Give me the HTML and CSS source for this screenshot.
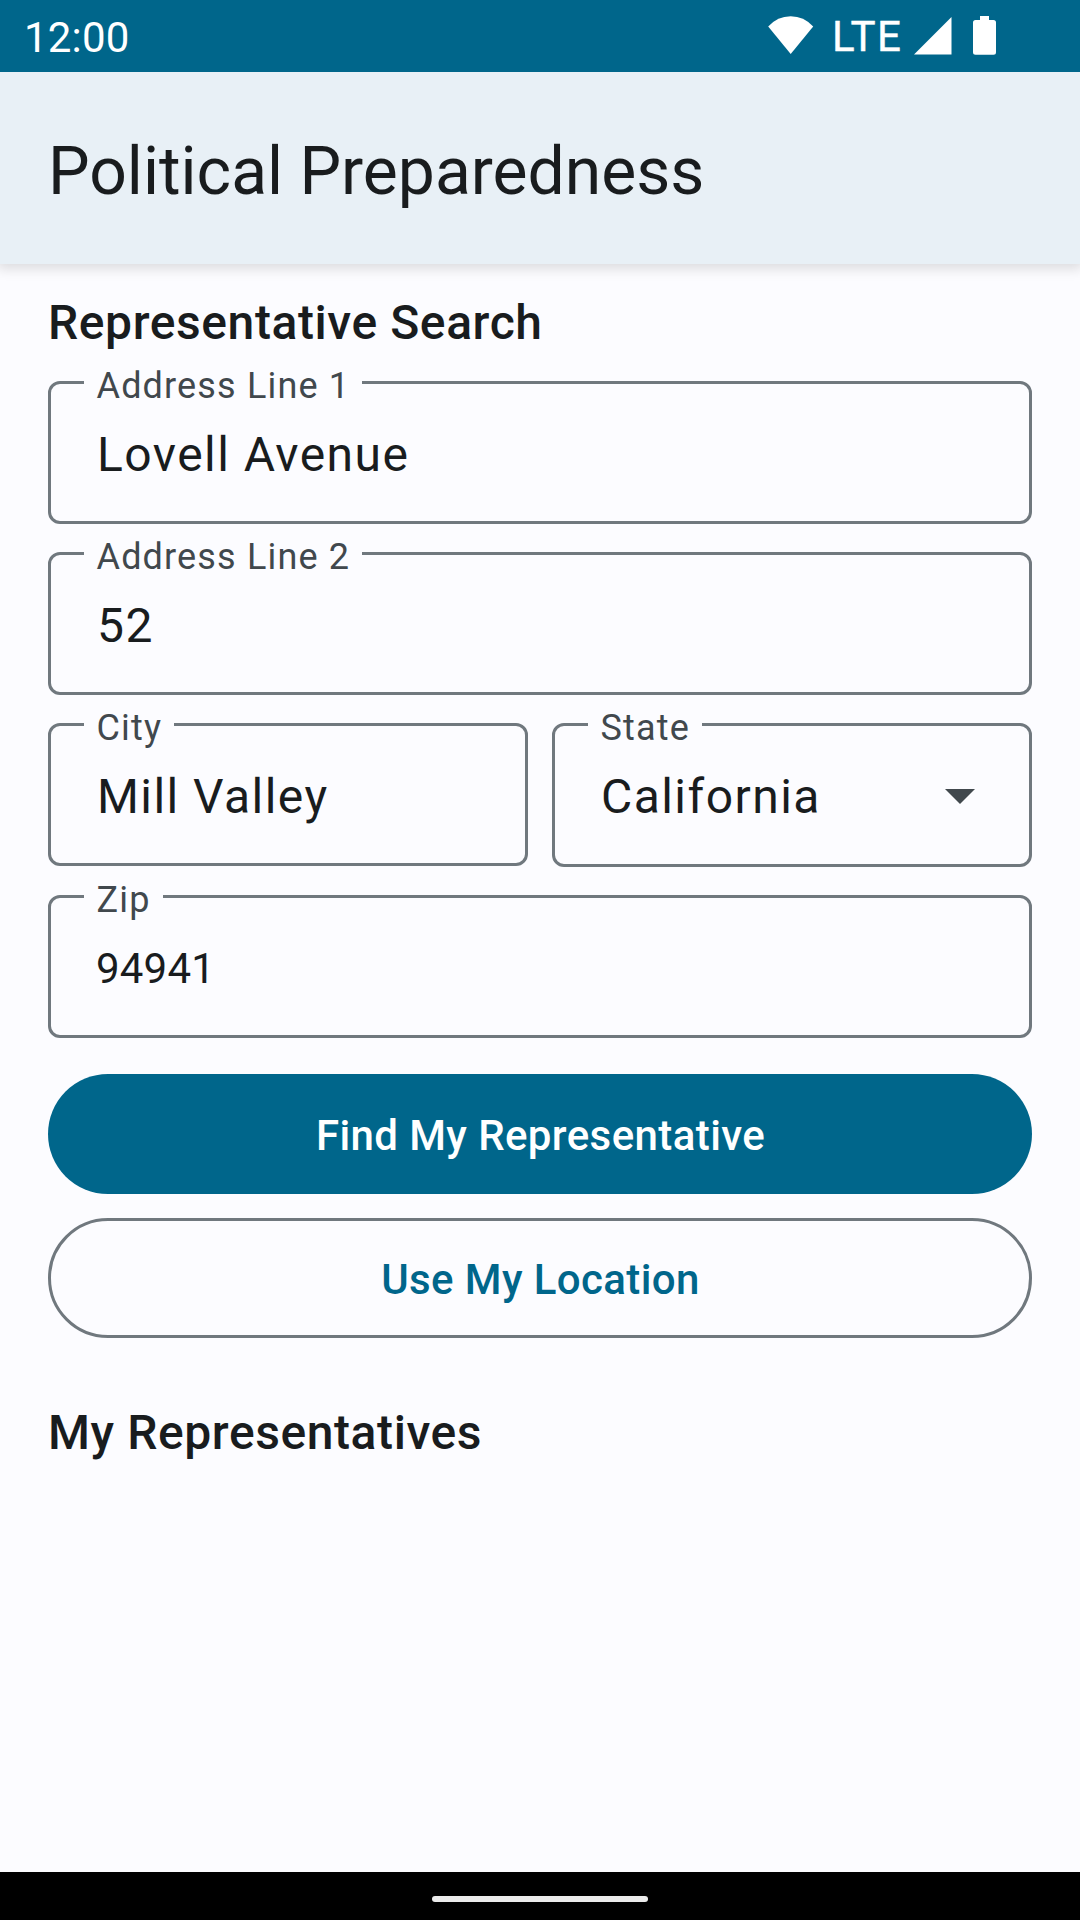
FILE: index.html
```html
<!DOCTYPE html>
<html lang="en">
<head>
<meta charset="utf-8">
<title>Political Preparedness</title>
<link rel="stylesheet" href="styles.css">
</head>
<body>
<div class="status">
  <span class="clock">12:00</span>
  <svg class="wifi" width="46" height="38" viewBox="0 0 46 38"><path d="M22.700 38L.2 10.600Q9.500 .3 22.700 .3T45.200 10.600Z"/></svg>
  <span class="lte">LTE</span>
  <svg class="signal" width="38" height="38" viewBox="0 0 38 38"><path d="M0 37.500L37.500 0V37.500Z"/></svg>
  <svg class="battery" width="24" height="39" viewBox="0 0 24 39"><path d="M7 0h9v4h4.500q2.500 0 2.500 2.500v29.800q0 2.500-2.500 2.500H2.500q-2.500 0-2.500-2.500V6.500Q0 4 2.500 4H7Z"/></svg>
</div>
<header class="app-bar"><h1>Political Preparedness</h1></header>
<main class="content">
  <h2>Representative Search</h2>
  <div class="form">
    <div class="field"><span class="label">Address Line 1</span><span class="value">Lovell Avenue</span></div>
    <div class="field"><span class="label">Address Line 2</span><span class="value">52</span></div>
    <div class="row">
      <div class="field"><span class="label">City</span><span class="value">Mill Valley</span></div>
      <div class="field dropdown"><span class="label">State</span><span class="value">California</span><svg class="arrow" width="30" height="15" viewBox="0 0 30 15"><path d="M0 0H30L15 15Z"/></svg></div>
    </div>
    <div class="field zip"><span class="label">Zip</span><span class="value">94941</span></div>
  </div>
  <div class="actions">
    <button type="button" class="btn primary">Find My Representative</button>
    <button type="button" class="btn outlined">Use My Location</button>
  </div>
  <h2>My Representatives</h2>
</main>
<footer class="nav"><div class="handle"></div></footer>
</body>
</html>
```
FILE: styles.css
```css
* { box-sizing: border-box; }

body {
  margin: 0;
  width: 1080px;
  height: 1920px;
  display: flex;
  flex-direction: column;
  overflow: hidden;
  background: #fcfcff;
  color: #191c1e;
  font-family: Roboto, sans-serif;
}

svg { display: block; flex: none; }

.status {
  height: 72px;
  flex: none;
  display: flex;
  align-items: flex-start;
  padding: 12px 83px 0 24px;
  background: #00668b;
  color: #fff;
  fill: #fff;
  font-size: 42px;
  line-height: 50px;
}
.clock { margin: 1px auto 0 0; letter-spacing: .2px; }
.wifi { margin: 4px 18px 0 0; }
.lte {
  width: 70px;
  margin-right: 12px;
  letter-spacing: 1.5px;
  white-space: nowrap;
  -webkit-text-stroke: .4px #fff;
}
.signal { margin: 5px 21px 0 0; }
.battery { margin-top: 4px; }

.app-bar {
  height: 192px;
  flex: none;
  display: flex;
  align-items: center;
  padding: 7px 48px 0;
  background: #e8f0f6;
  box-shadow: 0 2px 12px 3px rgba(0, 0, 0, .13);
}
/* The status bar stays above the app bar's shadow. */
.status { position: relative; z-index: 1; }
h1 { margin: 0; font-size: 66px; font-weight: 400; line-height: 78px; }

.content { flex: 1; padding: 29px 48px 0; }
h2 {
  margin: 0;
  font-size: 48px;
  font-weight: 500;
  line-height: 60px;
  letter-spacing: .58px;
}

.form { display: flex; flex-direction: column; gap: 28px; padding-top: 28px; }
.row { display: grid; grid-template-columns: 1fr 1fr; gap: 24px; align-items: start; }
.field {
  position: relative;
  height: 143px;
  display: flex;
  align-items: center;
  justify-content: space-between;
  padding: 5px 54px 0 46px;
  border: 3px solid #70787e;
  border-radius: 12px;
}
.dropdown { height: 144px; padding-top: 3px; }
.label {
  position: absolute;
  left: 33px;
  top: -19px;
  padding: 0 12px 0 12.5px;
  background: #fcfcff;
  color: #41484d;
  font-size: 36px;
  line-height: 42px;
  letter-spacing: 1.16px;
}
.value { font-size: 48px; line-height: 56px; letter-spacing: 1.45px; }
.zip { padding-left: 45px; }
.zip .value { font-size: 42px; letter-spacing: .2px; }
.arrow { fill: #41484d; }

.actions { display: flex; flex-direction: column; gap: 24px; padding: 36px 0 65px; }
.btn {
  height: 120px;
  padding: 3px 0 0 1px;
  border: 0;
  border-radius: 60px;
  font: 500 42px/50px Roboto, sans-serif;
  letter-spacing: .4px;
}
.primary { background: #00668b; color: #fff; }
.outlined { border: 3px solid #70787e; background: transparent; color: #00668b; }

.nav { height: 48px; flex: none; padding-top: 24px; background: #000; }
.handle { width: 216px; height: 6px; margin: 0 auto; border-radius: 3px; background: #ebebeb; }
```
